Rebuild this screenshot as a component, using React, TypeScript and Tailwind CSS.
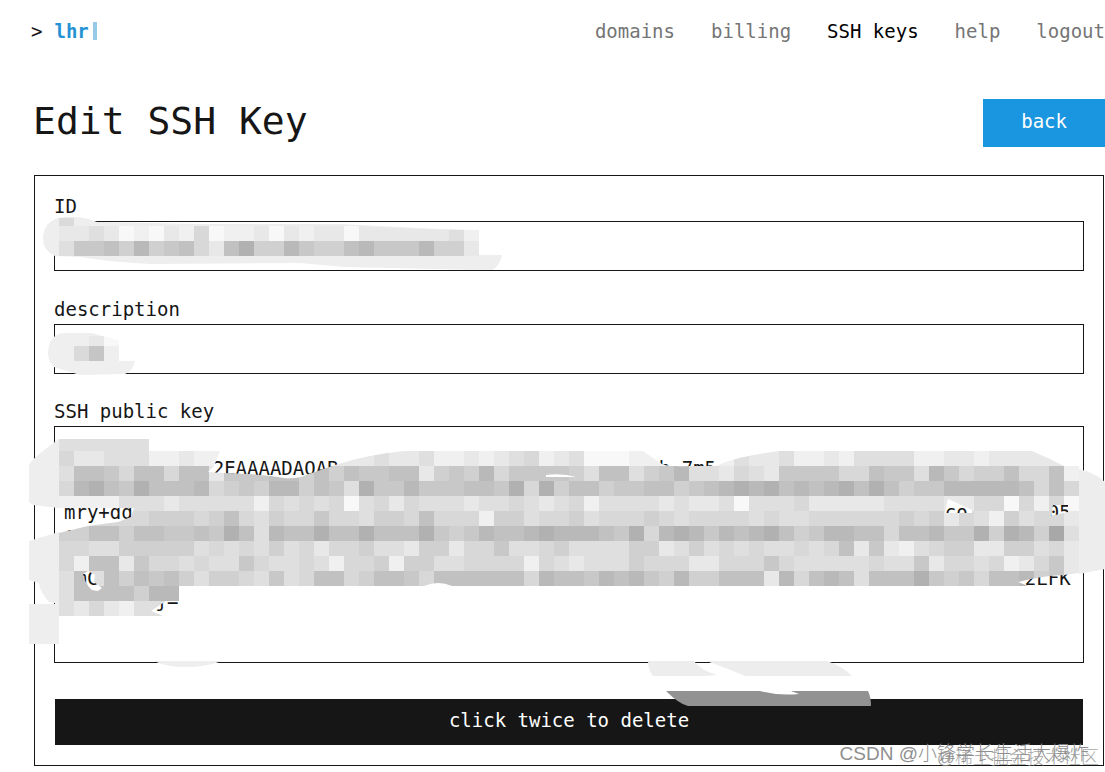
const CELL = 15;

const SHADES: Record<string, string> = {
  "0": "#a8a8a8",
  "1": "#b1b1b1",
  "2": "#b9b9b9",
  "3": "#c1c1c1",
  "4": "#c8c8c8",
  "5": "#d0d0d0",
  "6": "#d8d8d8",
  "7": "#dfdfdf",
  "8": "#e8e8e8",
  "9": "#f0f0f0",
  a: "#f8f8f8",
};

const KEY_ROWS = [
  "777777",
  "6887779989988888" + "88888788799898769" + "87aaa9999999788799" + "89777799889888889",
  "7334633633844433" + "53534433854526444" + "457337542778678444" + "46634472465536639",
  "6213413332654522" + "53471442444334161" + "533544335432121323" + "21313544222223636",
  "9999777877777967" + "676a7686777877678" + "769777787887a77768" + "888877778866a696a",
  "6666665556536756" + "64667556366695576" + "657666567666676776" + "66666565867957668",
  "5533533443413723" + "31331333145423321" + "222341621242321354" + "22336332441512507",
  "6677555557676757" + "68665778558664776" + "577775587576767767" + "63848976558855768",
  "6933846676774677" + "67966595577666696" + "787775666886664677" + "77767748667698648",
  "7373534357556747" + "63365334633333362" + "334232452553338263" + "23733314546332548",
  "73333522",
  "78689777",
];

const ID_ROWS = ["8878a9a896a998a8988a88888879", "7443525436831552455324442558"];

const KEY_TEXT = [
  "",
  " ".repeat(13) + "2EAAAADAQAB" + " ".repeat(28) + "h 7m5",
  "",
  "mry+dq" + " ".repeat(71) + "co'" + " ".repeat(6) + "05",
  "c/",
  "",
  " mC" + " ".repeat(81) + "2LFK",
  " ".repeat(8) + "j=",
].join("\n");

function Mosaic({ rows, x, y }: { rows: string[]; x: number; y: number }) {
  return (
    <g shapeRendering="crispEdges">
      {rows.map((row, r) =>
        row
          .split("")
          .map((c, k) => (
            <rect key={`${r}-${k}`} x={x + k * CELL} y={y + r * CELL} width={CELL} height={CELL} fill={SHADES[c]} />
          )),
      )}
    </g>
  );
}

function Redactions() {
  return (
    <svg
      className="pointer-events-none absolute top-0 left-0"
      width="1105"
      height="772"
      viewBox="0 0 1105 772"
      aria-hidden="true"
    >
      <defs>
        <clipPath id="key-area">
          <path
            clipRule="evenodd"
            d="M59 439H149V451H220L214 466L208 472L224 473Q262 474 284 478Q298 479 306 475L335 465Q370 454 405 451H643L662 464Q668 467 690 466L716 466Q728 459 765 453L780 451H1032L1050 459L1064 466H1079V573L1064 575Q1040 576 1018 582L1028 586H452Q438 580 424 586H179V601H166L151 611L163 616H59V533L88 526L118 522L131 517L134 508H59Z
            M948 499L972 510V513H945Z M1053 505H1068V512L1051 516Z
            M88 571L95 575L94 582L102 588L98 591L92 590Q85 584 83 574Z M546 475Q562 473 576 477L546 477Z"
          />
        </clipPath>
        <clipPath id="id-area">
          <path d="M59 226L359 226L420 229L479 230V256H59Z" />
        </clipPath>
      </defs>

      <path d="M43 236Q45 222 58 218Q78 214 97 222L200 224H340L479 231V255H502Q500 266 492 270H477L345 267L300 263L150 264Q110 262 80 257L55 256Q42 250 43 236Z" fill="#eeeeee" />
      <path d="M59 218H74V226H59Z" fill="#dadada" />
      <g clipPath="url(#id-area)">
        <Mosaic rows={ID_ROWS} x={59} y={226} />
      </g>

      <path d="M48 352Q49 336 62 333H92L119 341V361H135Q132 372 125 374L80 375L54 367Q48 362 48 352Z" fill="#efefef" />
      <path d="M89 336H104V346H89Z" fill="#e8e8e8" />
      <path d="M104 337L119 341V346H104Z" fill="#f8f8f8" />
      <path d="M74 346H89V361H74Z" fill="#dadada" />
      <path d="M89 346H104V361H89Z" fill="#c5c5c5" />

      <path d="M29 465Q30 460 59 439V508L33 505L29 502Z" fill="#eeeeee" />
      <path d="M29 541L59 532V604L49 602Q40 592 39 583L29 580Z" fill="#eeeeee" />
      <path d="M29 604H59V644H29Z" fill="#eeeeee" />
      <path d="M1079 469Q1096 473 1105 482V569L1079 574Z" fill="#ededed" />
      <g clipPath="url(#key-area)">
        <Mosaic rows={KEY_ROWS} x={59} y={436} />
      </g>

      <path d="M154 661H222Q206 667 186 667Q166 667 154 661Z" fill="#eeeeee" />
      <path d="M648 661H694Q700 670 717 675L704 676H653Q648 670 648 661Z" fill="#ededed" />
      <path d="M706 661H827Q844 667 852 676H745Q724 667 706 661Z" fill="#ededed" />
      <path d="M666 691H760Q778 696 799 694L791 691H868Q871 697 871 706H688Q679 704 666 691Z" fill="#929292" />
    </svg>
  );
}

const NAV = ["domains", "billing", "SSH keys", "help", "logout"];

export default function App() {
  return (
    <div className="relative overflow-hidden bg-white pb-1.5 font-['DejaVu_Sans_Mono',monospace] text-[19px] text-[#161616]">
      <header className="flex items-center justify-between pt-[17px] pb-0.5 pl-[31px] leading-7">
        <a href="#home" className="flex items-center gap-3">
          <span>&gt;</span>
          <span className="flex items-center font-bold text-[#2492d4]">
            lhr
            <span className="ml-1 h-[18px] w-1 bg-[#97c9e8]" />
          </span>
        </a>
        <nav className="flex gap-9">
          {NAV.map((item) => (
            <a key={item} href="#nav" className={item === "SSH keys" ? "text-black" : "text-[#757575]"}>
              {item}
            </a>
          ))}
        </nav>
      </header>

      <div className="mt-[52px] flex items-start justify-between pl-[33px]">
        <h1 className="text-[38px] leading-[44px] font-medium">Edit SSH Key</h1>
        <button type="button" className="h-12 bg-[#1a95e0] px-[38px] pb-1 text-white">
          back
        </button>
      </div>

      <form className="mt-7 mr-px ml-[34px] border border-[#161616] px-[19px] pt-[18px] pb-5">
        <label htmlFor="key-id" className="block pb-0.5 leading-[25px]">
          ID
        </label>
        <input id="key-id" className="block h-[50px] w-full border border-[#161616] px-2.5 outline-none" />
        <label htmlFor="description" className="mt-[26px] block pb-0.5 leading-[25px]">
          description
        </label>
        <input id="description" className="block h-[50px] w-full border border-[#161616] px-2.5 outline-none" />
        <label htmlFor="public-key" className="mt-[25px] block pb-0.5 leading-[25px]">
          SSH public key
        </label>
        <textarea
          id="public-key"
          wrap="off"
          spellCheck={false}
          defaultValue={KEY_TEXT}
          className="block h-[237px] w-full resize-none overflow-hidden border border-[#161616] px-[9px] py-2 leading-[22px] whitespace-pre outline-none"
        />
        <div className="mt-9 px-px">
          <button type="button" className="block h-[46px] w-full bg-[#161616] pb-1 text-white">
            click twice to delete
          </button>
        </div>
      </form>

      <Redactions />

      <div className="pointer-events-none absolute right-4 bottom-1.5 font-['Liberation_Sans','Noto_Sans_CJK_SC',sans-serif] text-[19px] leading-6 font-light whitespace-nowrap text-[#8e8e8e]">
        CSDN @小锋学长生活大爆炸
      </div>
      <div className="pointer-events-none absolute right-1.5 bottom-0.5 font-['Liberation_Sans','Noto_Sans_CJK_SC',sans-serif] text-[18px] leading-6 font-light whitespace-nowrap text-[#8e8e8e]/80">
        @稀土掘金技术社区
      </div>
    </div>
  );
}
